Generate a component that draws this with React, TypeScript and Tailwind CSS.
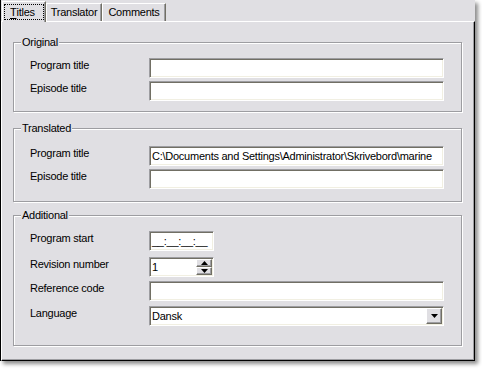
import type { ReactNode } from 'react';

const sunken =
    'border border-t-[#9d9da1] border-l-[#9d9da1] border-r-white border-b-white shadow-[inset_1px_1px_0_#716f64,inset_-1px_-1px_0_#f1efe2] bg-white';
const raised =
    'border border-t-white border-l-white border-r-[#716f64] border-b-[#716f64] shadow-[inset_-1px_-1px_0_#9d9da1] bg-[#e0dfe3]';

function Group({ title, className, children }: { title: string; className: string; children: ReactNode }) {
    return (
        <fieldset className="min-w-0 border border-[#9d9da1] shadow-[inset_1px_1px_0_#fff,1px_1px_0_#fff] [&+fieldset]:mt-0">
            <legend className="ml-[7px] px-[1px] leading-[13px] bg-[#e0dfe3]">{title}</legend>
            <div className={`pl-[16px] pr-[17px] ${className}`}>{children}</div>
        </fieldset>
    );
}

function Row({ label, className = '', children }: { label: string; className?: string; children: ReactNode }) {
    return (
        <div className={`flex items-start ${className}`}>
            <div className="w-[119px] leading-[13px] pt-[1px]">{label}</div>
            {children}
        </div>
    );
}

function TextBox({ value = '', className = 'w-[295px]' }: { value?: string; className?: string }) {
    return (
        <div className={`${sunken} ${className} h-[20px] flex items-center pl-[2px] overflow-hidden whitespace-nowrap`}>
            {value}
        </div>
    );
}

function Triangle({ up }: { up?: boolean }) {
    return (
        <svg width="7" height="4" viewBox="0 0 7 4">
            <path d={up ? 'M3.5 0 L7 4 L0 4 Z' : 'M0 0 L7 0 L3.5 4 Z'} fill="#000" />
        </svg>
    );
}

export default function App() {
    return (
        <div className="w-[482px] h-[369px] bg-white font-['Liberation_Sans',Arial,sans-serif] text-[11px] tracking-[-0.25px] text-black">
            <div className="w-[475px] h-[361px] flex flex-col border-l border-black bg-[#e0dfe3] shadow-[3px_3px_4px_rgba(0,0,0,0.45)]">
                {/* tab strip */}
                <div className="h-[21px] flex items-end pl-[1px] shrink-0">
                    <div className="relative z-10 w-[44px] h-[21px] -mb-px bg-[#e0dfe3] border-l border-t border-r border-l-white border-t-white border-r-[#716f64] shadow-[inset_-1px_0_0_#9d9da1] pt-[2px] pl-[1px] pr-[1px] pb-[2px]">
                        <div className="h-full border border-dotted border-black flex items-center pl-[5px] leading-[13px]">
                            <span className="underline underline-offset-2">T</span>itles
                        </div>
                    </div>
                    <div className="w-[56px] h-[18px] border-l border-t border-r border-l-white border-t-white border-r-[#716f64] shadow-[inset_-1px_0_0_#9d9da1] flex items-center justify-center leading-[13px]">
                        Translator
                    </div>
                    <div className="w-[64px] h-[18px] border-l border-t border-r border-l-white border-t-white border-r-[#716f64] shadow-[inset_-1px_0_0_#9d9da1] flex items-center justify-center leading-[13px]">
                        Comments
                    </div>
                </div>

                {/* tab page */}
                <div className="flex-1 flex flex-col border-l border-t border-r border-b border-l-white border-t-white border-r-black border-b-black shadow-[inset_-1px_-1px_0_#9d9da1] pl-[11px] pr-[12px] pt-[14px]">
                    <Group title="Original" className="pt-[9px] pb-[10px]">
                        <Row label="Program title">
                            <TextBox />
                        </Row>
                        <Row label="Episode title" className="mt-[3px]">
                            <TextBox />
                        </Row>
                    </Group>

                    <div className="h-[10px]" />

                    <Group title="Translated" className="pt-[11px] pb-[12px]">
                        <Row label="Program title">
                            <TextBox value="C:\Documents and Settings\Administrator\Skrivebord\marine" />
                        </Row>
                        <Row label="Episode title" className="mt-[3px]">
                            <TextBox />
                        </Row>
                    </Group>

                    <div className="h-[7px]" />

                    <Group title="Additional" className="pt-[9px] pb-[19px]">
                        <Row label="Program start">
                            <TextBox value="__:__:__:__" className="w-[65px]" />
                        </Row>
                        <Row label="Revision number" className="mt-[6px]">
                            <div className={`${sunken} w-[65px] h-[20px] flex items-stretch p-[1px]`}>
                                <div className="flex-1 flex items-center pl-[1px]">1</div>
                                <div className="w-[16px] flex flex-col">
                                    <div className={`${raised} flex-1 flex items-center justify-center`}>
                                        <Triangle up />
                                    </div>
                                    <div className={`${raised} flex-1 flex items-center justify-center`}>
                                        <Triangle />
                                    </div>
                                </div>
                            </div>
                        </Row>
                        <Row label="Reference code" className="mt-[4px]">
                            <TextBox />
                        </Row>
                        <Row label="Language" className="mt-[5px]">
                            <div className={`${sunken} w-[295px] h-[20px] flex items-stretch p-[1px]`}>
                                <div className="flex-1 flex items-center pl-[1px]">Dansk</div>
                                <div className={`${raised} w-[16px] flex items-center justify-center`}>
                                    <Triangle />
                                </div>
                            </div>
                        </Row>
                    </Group>
                </div>
            </div>
        </div>
    );
}
